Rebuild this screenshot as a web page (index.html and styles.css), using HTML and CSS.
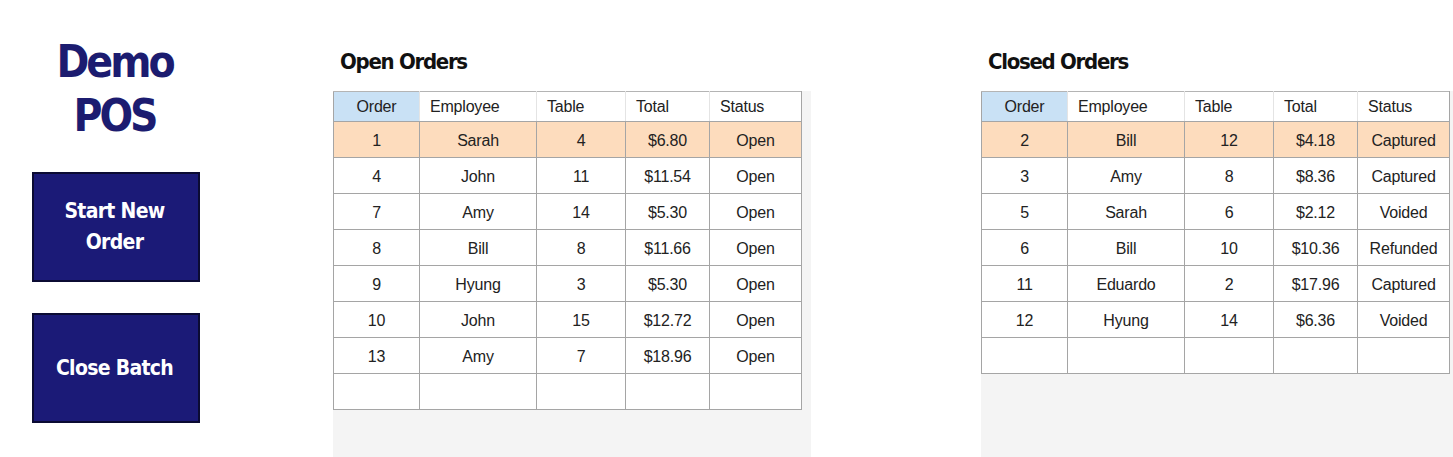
FILE: index.html
```html
<!DOCTYPE html>
<html lang="en">
<head>
<meta charset="utf-8">
<title>Demo POS</title>
<link rel="stylesheet" href="styles.css">
</head>
<body>
<div class="app">
  <aside class="side">
    <h1 class="brand">Demo<br>POS</h1>
    <button class="action">Start New<br>Order</button>
    <button class="action">Close Batch</button>
  </aside>

  <section class="orders open">
    <h2 class="orders-title">Open Orders</h2>
    <div class="grid-panel">
      <table class="grid">
        <colgroup><col class="c1"><col class="c2"><col class="c3"><col class="c4"><col class="c5"></colgroup>
        <thead>
          <tr><th class="sel">Order</th><th>Employee</th><th>Table</th><th>Total</th><th>Status</th></tr>
        </thead>
        <tbody>
          <tr class="hl"><td>1</td><td>Sarah</td><td>4</td><td>$6.80</td><td>Open</td></tr>
          <tr><td>4</td><td>John</td><td>11</td><td>$11.54</td><td>Open</td></tr>
          <tr><td>7</td><td>Amy</td><td>14</td><td>$5.30</td><td>Open</td></tr>
          <tr><td>8</td><td>Bill</td><td>8</td><td>$11.66</td><td>Open</td></tr>
          <tr><td>9</td><td>Hyung</td><td>3</td><td>$5.30</td><td>Open</td></tr>
          <tr><td>10</td><td>John</td><td>15</td><td>$12.72</td><td>Open</td></tr>
          <tr><td>13</td><td>Amy</td><td>7</td><td>$18.96</td><td>Open</td></tr>
          <tr><td></td><td></td><td></td><td></td><td></td></tr>
        </tbody>
      </table>
    </div>
  </section>

  <section class="orders closed">
    <h2 class="orders-title">Closed Orders</h2>
    <div class="grid-panel">
      <table class="grid">
        <colgroup><col class="c1"><col class="c2"><col class="c3"><col class="c4"><col class="c5"></colgroup>
        <thead>
          <tr><th class="sel">Order</th><th>Employee</th><th>Table</th><th>Total</th><th>Status</th></tr>
        </thead>
        <tbody>
          <tr class="hl"><td>2</td><td>Bill</td><td>12</td><td>$4.18</td><td>Captured</td></tr>
          <tr><td>3</td><td>Amy</td><td>8</td><td>$8.36</td><td>Captured</td></tr>
          <tr><td>5</td><td>Sarah</td><td>6</td><td>$2.12</td><td>Voided</td></tr>
          <tr><td>6</td><td>Bill</td><td>10</td><td>$10.36</td><td>Refunded</td></tr>
          <tr><td>11</td><td>Eduardo</td><td>2</td><td>$17.96</td><td>Captured</td></tr>
          <tr><td>12</td><td>Hyung</td><td>14</td><td>$6.36</td><td>Voided</td></tr>
          <tr><td></td><td></td><td></td><td></td><td></td></tr>
        </tbody>
      </table>
    </div>
  </section>
</div>
</body>
</html>
```

FILE: styles.css
```css
html, body {
  margin: 0;
  padding: 0;
  background: #ffffff;
}

body {
  width: 1453px;
  height: 457px;
  overflow: hidden;
}

.app {
  display: flex;
  height: 457px;
}

.side {
  width: 333px;
  flex: none;
  display: flex;
  flex-direction: column;
  align-items: flex-start;
  padding-left: 32px;
  box-sizing: border-box;
}

.brand {
  width: 168px;
  margin: 35px 0 0 0;
  padding-right: 3px;
  box-sizing: border-box;
  text-align: center;
  font-family: "DejaVu Sans Condensed", "DejaVu Sans", sans-serif;
  font-weight: bold;
  font-size: 44px;
  line-height: 54px;
  letter-spacing: -3px;
  color: #1c1c70;
}

.action {
  width: 168px;
  height: 110px;
  box-sizing: border-box;
  background: #1b1a77;
  border: 2px solid #0b0b33;
  color: #ffffff;
  font-family: "DejaVu Sans Condensed", "DejaVu Sans", sans-serif;
  font-weight: bold;
  font-size: 21px;
  line-height: 31px;
  letter-spacing: -0.7px;
  padding: 0 3px 0 0;
  margin-top: 31px;
  cursor: pointer;
}

.brand + .action {
  margin-top: 29px;
}

.orders {
  flex: none;
  display: flex;
  flex-direction: column;
}

.open {
  width: 478px;
}

.closed {
  width: 472px;
  margin-left: 170px;
}

.orders-title {
  margin: 48px 0 0 7px;
  height: 43px;
  font-family: "DejaVu Sans Condensed", "DejaVu Sans", sans-serif;
  font-weight: bold;
  font-size: 22px;
  line-height: 28px;
  letter-spacing: -1.3px;
  color: #111111;
}

.grid-panel {
  flex: 1;
  background: #f4f4f4;
}

.grid {
  border-collapse: collapse;
  table-layout: fixed;
  background: #ffffff;
  font-family: "Liberation Sans", Arial, sans-serif;
  font-size: 16px;
  letter-spacing: -0.2px;
  color: #222222;
}

.c1 { width: 86px; }
.c2 { width: 117px; }
.c3 { width: 89px; }
.c4 { width: 84px; }
.c5 { width: 92px; }

.grid th,
.grid td {
  border: 1px solid #a5a5a5;
  padding: 0;
  white-space: nowrap;
  overflow: hidden;
}

.grid th {
  height: 29px;
  font-weight: normal;
  text-align: left;
  padding-left: 10px;
  border-top-color: #b4b4b4;
  border-left-color: #e4e4e4;
  border-right-color: #e4e4e4;
}

.grid th:first-child {
  border-left-color: #a5a5a5;
}

.grid th:last-child {
  border-right-color: #a5a5a5;
}

.grid th.sel {
  background: #c9e1f5;
  text-align: center;
  padding-left: 0;
}

.grid td {
  height: 33px;
  padding-top: 2px;
  line-height: 33px;
  text-align: center;
}

.grid tr.hl td {
  background: #fddcbd;
}
```
